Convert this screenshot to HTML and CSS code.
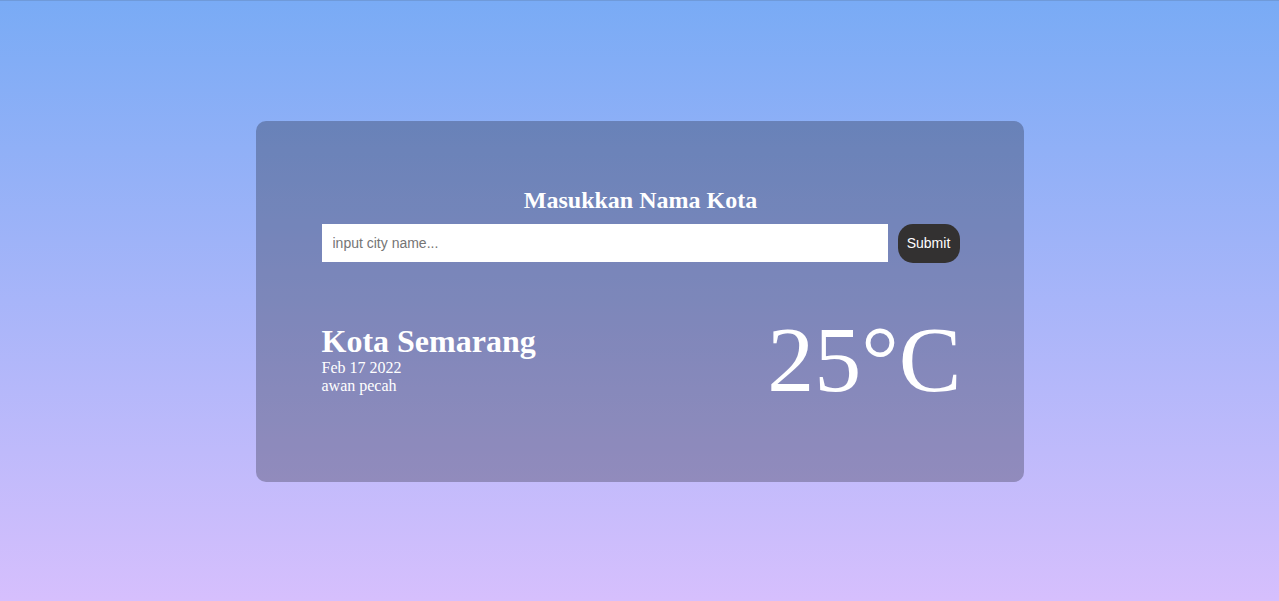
FILE: index.html
```html
<!DOCTYPE html>
<html lang="id">
<head>
<meta charset="utf-8">
<title>Cuaca</title>
<link rel="stylesheet" href="styles.css">
</head>
<body>
<main class="card">
  <h2 class="title">Masukkan Nama Kota</h2>
  <form class="search">
    <input class="search-input" type="text" placeholder="input city name...">
    <button class="search-btn" type="button">Submit</button>
  </form>
  <section class="weather">
    <div class="info">
      <div class="city">Kota Semarang</div>
      <div class="date">Feb 17 2022</div>
      <div class="desc">awan pecah</div>
    </div>
    <div class="temp">25°C</div>
  </section>
</main>
</body>
</html>
```
FILE: styles.css
```css
html {
  height: 100%;
}
body {
  margin: 0;
  min-height: 100vh;
  box-sizing: border-box;
  border-top: 1px solid #6f9ad9;
  background: linear-gradient(to bottom, #79abf5 0%, #d6bffd 100%);
  font-family: "Liberation Serif", "Times New Roman", serif;
  color: #fff;
  display: flex;
  align-items: center;
  justify-content: center;
}
.card {
  width: 768px;
  box-sizing: border-box;
  padding: 66px 64px 68px 66px;
  border-radius: 10px;
  background-color: rgba(10, 10, 20, 0.27);
}
.title {
  margin: 0 0 11px;
  font-size: 24px;
  line-height: 26px;
  font-weight: bold;
  text-align: center;
}
.search {
  display: flex;
  align-items: center;
  gap: 10px;
  height: 39px;
}
.search-input {
  flex: 1;
  height: 38px;
  box-sizing: border-box;
  border: none;
  border-radius: 0;
  padding: 0 11px;
  font-family: "Liberation Sans", Arial, sans-serif;
  font-size: 14px;
  color: #222;
  background: #fff;
  outline: none;
}
.search-input::placeholder {
  color: #757575;
}
.search-btn {
  width: 62px;
  height: 39px;
  border: none;
  border-radius: 15px;
  background: #333131;
  color: #fff;
  font-family: "Liberation Sans", Arial, sans-serif;
  font-size: 14px;
  padding: 0;
}
.weather {
  margin-top: 41px;
  display: flex;
  justify-content: space-between;
  align-items: center;
}
.city {
  font-size: 32px;
  font-weight: bold;
  line-height: 36px;
}
.date,
.desc {
  font-size: 16px;
  line-height: 18px;
}
.temp {
  font-size: 94px;
  line-height: 110px;
  margin-right: -2px;
}
```
